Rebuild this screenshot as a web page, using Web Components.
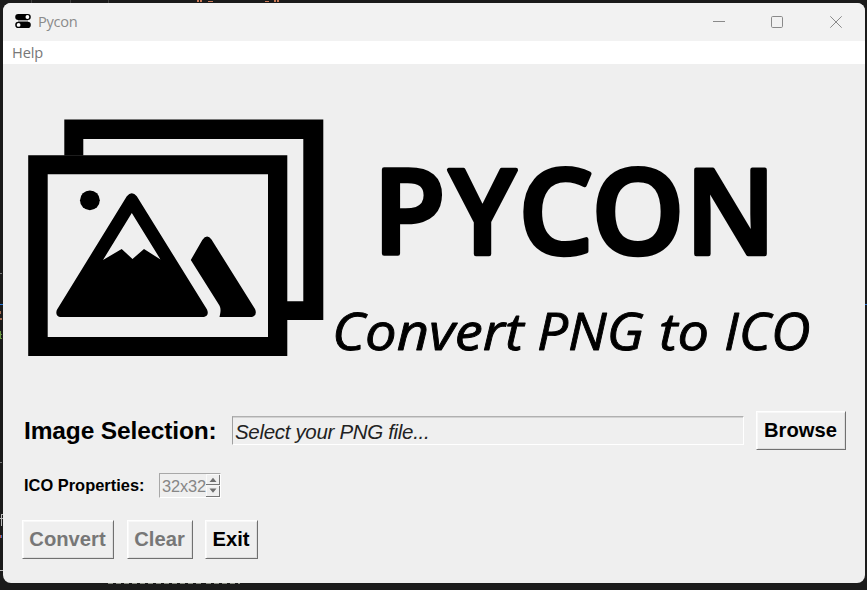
<!DOCTYPE html>
<html lang="en">
<head>
<meta charset="utf-8">
<title>Pycon</title>
<style>
html,body{margin:0;height:100%;overflow:hidden;background:#1b1b1b}
</style>
</head>
<body>
<app-desktop>
  <app-window>
    <title-bar>Pycon</title-bar>
    <menu-bar>Help</menu-bar>
    <hero-banner></hero-banner>
    <form-row style="--h:39px;--top:11px;--left:21px">
      <tk-label style="--size:24.5px;--w:208px;--ls:-.13px">Image Selection:</tk-label>
      <tk-entry>Select your PNG file...</tk-entry>
      <tk-button style="--w:90px;--ml:12px">Browse</tk-button>
    </form-row>
    <form-row style="--h:24px;--top:23px;--left:21px">
      <tk-label style="--size:16.4px;--w:135px;--ls:.02px">ICO Properties:</tk-label>
      <tk-spinbox>32x32</tk-spinbox>
    </form-row>
    <form-row style="--h:39px;--top:23px;--left:19px">
      <tk-button disabled style="--w:92px">Convert</tk-button>
      <tk-button disabled style="--w:66px;--ml:13px">Clear</tk-button>
      <tk-button style="--w:53px;--ml:12px">Exit</tk-button>
    </form-row>
  </app-window>
</app-desktop>
<script>
function define(name, html){
  const t=document.createElement('template');
  t.innerHTML=html;
  customElements.define(name, class extends HTMLElement{
    constructor(){super();this.attachShadow({mode:'open'}).append(t.content.cloneNode(true));}
  });
}
define('app-desktop',`
<style>
:host{display:block;position:relative;box-sizing:border-box;width:867px;height:590px;padding:3px 2px 7px 3px;background:#1b1b1b}
svg{position:absolute;left:0;top:0}
</style>
<svg width="867" height="590" shape-rendering="crispEdges" aria-hidden="true">
  <path d="M31.5 0V3M70.5 0V3M108.5 0V3" stroke="#404040"/>
  <path d="M197 0h2v2h-2zM200 0h2v2h-2zM274 0h2v2h-2zM277 0h2v2h-2zM208 1h5v1h-5zM265 1h4v1h-4z" fill="#c97a58"/>
  <path d="M0 273h2v1H0zM0 462h2v1H0z" fill="#777"/>
  <path d="M0 304h3v1H0zM865 304h2v1h-2z" fill="#2a78d8"/>
  <path d="M0 311h1v3H0zM0 318h2v2H0z" fill="#a36a50"/>
  <path d="M0 331h1v8H0zM0 334h2v1H0zM0 338h2v1H0z" fill="#65943f"/>
  <path d="M1 514h2v1H1zM0 518h3v1H0zM1 515h1v11H1zM0 570h3v1H0z" fill="#b9b9b9"/>
  <path d="M0 535h1v3H0z" fill="#c05040"/><path d="M1 535h1v3H1z" fill="#3a6ec0"/>
  <path d="M108 583.5H201M206 583.5H240" stroke="#8d9086" stroke-dasharray="5 3"/>
</svg>
<slot></slot>`);
define('app-window',`
<style>
:host{display:flex;flex-direction:column;position:relative;height:580px;border-radius:8px;overflow:hidden;background:#efefef}
</style><slot></slot>`);
define('title-bar',`
<style>
:host{display:flex;align-items:center;height:38px;background:#f2f2f2;color:#8b8b8b;font:14.6px/20px "Open Sans",sans-serif;letter-spacing:-.3px;flex:none}
.icon{margin-left:12px;margin-bottom:2px;width:16px;height:16px}
.t{flex:1;margin-left:7px;padding-bottom:2px}
.c{width:160px;height:38px}
</style>
<svg class="icon" viewBox="0 0 16 16"><rect x="3" y="6" width="10" height="3" fill="#a8a8a8"/><rect x="0.2" y="1" width="15.6" height="6" rx="3"/><rect x="0.2" y="8.8" width="15.6" height="6.2" rx="3.1"/><circle cx="12.4" cy="4" r="1.9" fill="#fff"/><circle cx="3.6" cy="11.9" r="1.9" fill="#fff"/></svg>
<span class="t"><slot></slot></span>
<svg class="c" viewBox="0 0 160 38" fill="none" stroke="#8a8a8a"><path d="M8 18.5h12"/><rect x="66.5" y="13.5" width="11" height="11" rx="1.2"/><path d="M125.3 13.3l11.4 11.4M136.7 13.3l-11.4 11.4"/></svg>`);
define('menu-bar',`
<style>
:host{display:flex;align-items:center;height:23px;padding:0 0 1px 9px;box-sizing:border-box;background:#fff;color:#777;font:14.6px/22px "Open Sans",sans-serif;letter-spacing:-.1px;flex:none}
</style><slot></slot>`);
define('hero-banner',`
<style>
:host{display:block;height:336px;flex:none}
svg{display:block}
text{font-family:"Open Sans",sans-serif;stroke:#000;stroke-linejoin:round}
.name{font-size:118px;font-weight:600;stroke-width:4.4px}
.tag{font-size:52px;font-style:italic;stroke-width:.9px}
</style>
<svg width="862" height="336" viewBox="3 64 862 336">
  <path fill-rule="evenodd" d="M28.2 155.2H287.3V356H28.2zM47.7 174.2V337H268V174.2z"/>
  <path d="M64.3 155.5V119.6H323.3V320H287V301.2H303.3V139H83.3V155.5z"/>
  <circle cx="89.9" cy="200.3" r="9.9"/>
  <path fill-rule="evenodd" d="M126.8 196.3Q131.8 190.3 136.8 196.3L207 309.5Q209.5 315.5 204 317H60Q55 315.5 56.8 310zM131.8 213L103 260L121.7 249L132.5 259L144 249L160.5 259.5z"/>
  <path d="M190.8 260L202.3 240Q207 233.5 211.5 239.5L255 309Q257.6 315 252 317H219.5C221 311 221 307.5 218.5 304z"/>
  <text class="name" y="254.2"><tspan x="373">P</tspan><tspan x="449" textLength="67" lengthAdjust="spacingAndGlyphs">Y</tspan><tspan x="518.5">C</tspan><tspan x="591.5">O</tspan><tspan x="685.5" textLength="90" lengthAdjust="spacingAndGlyphs">N</tspan></text>
  <text class="tag" y="350"><tspan x="332" textLength="191.5" lengthAdjust="spacingAndGlyphs">Convert</tspan> <tspan x="537" textLength="107" lengthAdjust="spacingAndGlyphs">PNG</tspan> <tspan x="659" textLength="50" lengthAdjust="spacingAndGlyphs">to</tspan> <tspan x="724" textLength="86.5" lengthAdjust="spacingAndGlyphs">ICO</tspan></text>
</svg>`);
define('form-row',`
<style>
:host{display:flex;align-items:center;height:var(--h);margin:var(--top) 0 0 var(--left);flex:none}
</style><slot></slot>`);
define('tk-label',`
<style>
:host{display:block;width:var(--w);flex:none;white-space:nowrap;color:#000;font:bold var(--size)/28px "Liberation Sans",sans-serif;letter-spacing:var(--ls)}
</style><slot></slot>`);
define('tk-entry',`
<style>
:host{display:block;box-sizing:border-box;width:512px;height:29px;border:1px solid;border-color:#b0b0b0 #fff #fff #a0a0a0;box-shadow:inset 0 1px #d2d2d2;padding-left:2px;color:#222;white-space:nowrap;font:italic 20.5px/29px "Liberation Sans",sans-serif;letter-spacing:-.32px}
</style><slot></slot>`);
define('tk-button',`
<style>
:host{display:flex;align-items:center;justify-content:center;box-sizing:border-box;width:var(--w);height:39px;margin-left:var(--ml,0);border:1px solid;border-color:#fff #707070 #707070 #fff;box-shadow:inset 1px 1px #f8f8f8,inset -1px -1px #dedede;padding:0 1px 2px 0;color:#000;white-space:nowrap;font:bold 20.2px/30px "Liberation Sans",sans-serif;flex:none}
:host([disabled]){color:#777}
</style><slot></slot>`);
define('tk-spinbox',`
<style>
:host{display:flex;box-sizing:border-box;width:62px;height:25px;border:1px solid;border-color:#a8a8a8 #fff #fff #a8a8a8;color:#868686;white-space:nowrap;font:16.4px/24px "Liberation Sans",sans-serif}
span{width:46px;padding-left:2px;box-sizing:border-box;letter-spacing:-.15px}
svg{display:block}
</style><span><slot></slot></span><svg width="14" height="23"><path d="M0 10.5H14M13.5 1V11M0 22.5H14M13.5 12V23" stroke="#777" fill="none"/><path d="M0 .5H13M.5 0V10M0 12H13M.5 12V22" stroke="#fafafa" fill="none"/><path d="M3.5 8h7L7 3.7zM3.5 14.5h7L7 18.7z" fill="#6e6e6e"/></svg>`);
</script>
</body>
</html>
